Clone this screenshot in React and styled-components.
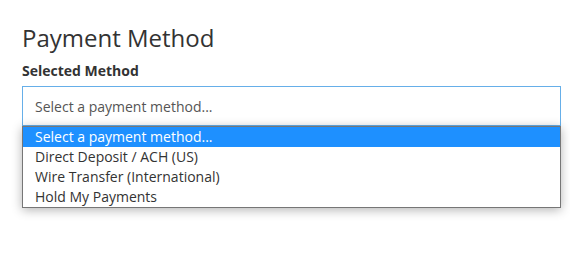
import styled, { createGlobalStyle } from 'styled-components'

const Global = createGlobalStyle`
  html, body {
    margin: 0;
    padding: 0;
    background: #fff;
    font-family: "Open Sans", "Liberation Sans", sans-serif;
    color: #333;
  }
`

const Page = styled.div`
  box-sizing: border-box;
  min-height: 100vh;
  padding: 25px 9px 0 22px;
`

const Title = styled.h2`
  margin: 0 0 10px;
  font-size: 24px;
  font-weight: 400;
  line-height: 26px;
  color: #333;
`

const Label = styled.label`
  display: block;
  margin-bottom: 5px;
  font-size: 14px;
  font-weight: 700;
  line-height: 20px;
  color: #333;
`

const Field = styled.div`
  position: relative;
`

const SelectBox = styled.div`
  box-sizing: border-box;
  height: 40px;
  padding: 0 12px;
  display: flex;
  align-items: center;
  border: 1px solid #66afe9;
  background: #fff;
  font-size: 14px;
  color: #555;
`

const Menu = styled.ul`
  position: absolute;
  top: 40px;
  left: 0;
  right: 0;
  margin: 0;
  padding: 0;
  list-style: none;
  background: #fff;
  border: 1px solid #767676;
  box-shadow: 0 2px 10px rgba(0, 0, 0, 0.3);
`

const Option = styled.li`
  height: 20px;
  line-height: 20px;
  padding: 0 12px;
  font-size: 14px;
  color: ${(p) => (p.$active ? '#fff' : '#333')};
  background: ${(p) => (p.$active ? '#1e90ff' : 'transparent')};
`

const options = [
  'Select a payment method...',
  'Direct Deposit / ACH (US)',
  'Wire Transfer (International)',
  'Hold My Payments',
]

export default function App() {
  return (
    <Page>
      <Global />
      <Title>Payment Method</Title>
      <Label>Selected Method</Label>
      <Field>
        <SelectBox>Select a payment method...</SelectBox>
        <Menu>
          {options.map((o, i) => (
            <Option key={o} $active={i === 0}>
              {o}
            </Option>
          ))}
        </Menu>
      </Field>
    </Page>
  )
}
